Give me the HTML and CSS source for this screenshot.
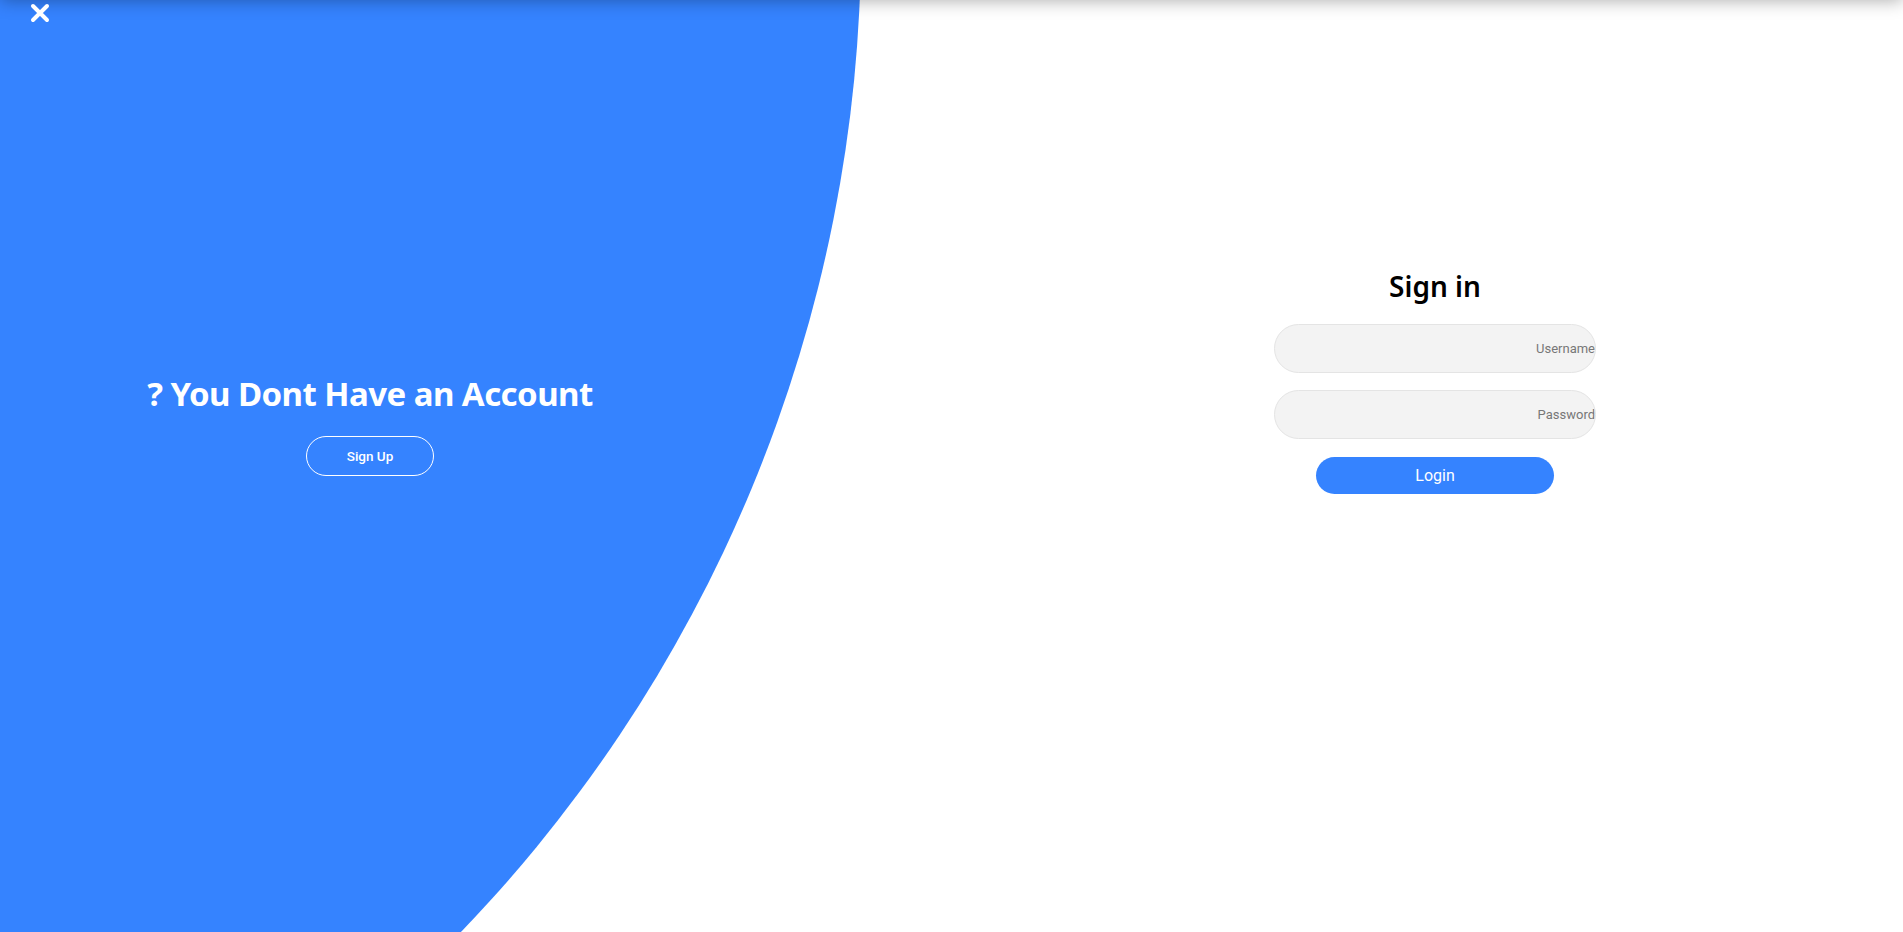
FILE: index.html
```html
<!DOCTYPE html>
<html lang="en">
<head>
<meta charset="utf-8">
<title>Sign in</title>
<link rel="stylesheet" href="styles.css">
</head>
<body>
<div class="page">
  <div class="blob"></div>
  <div class="top-shadow"></div>
  <button class="close" type="button" aria-label="Close">
    <svg width="20" height="20" viewBox="0 0 20 20"><path d="M3 3L17 17M17 3L3 17" stroke="#fff" stroke-width="4" stroke-linecap="round" fill="none"/></svg>
  </button>
  <main class="panels">
    <section class="panel panel-left">
      <h2 class="panel-title">? You Dont Have an Account</h2>
      <button class="btn-outline" type="button">Sign Up</button>
    </section>
    <section class="panel panel-right">
      <form class="signin-form">
        <h2 class="form-title">Sign in</h2>
        <input class="field" type="text" placeholder="Username">
        <input class="field" type="password" placeholder="Password">
        <button class="btn-primary" type="button">Login</button>
      </form>
    </section>
  </main>
</div>
</body>
</html>
```
FILE: styles.css
```css
* { box-sizing: border-box; }
html, body { margin: 0; padding: 0; height: 100%; }
body {
  background: #fff;
  font-family: "Noto Sans", "Open Sans", sans-serif;
  overflow: hidden;
}
.page {
  position: relative;
  width: 100%;
  height: 932px;
  overflow: hidden;
}
.blob {
  position: absolute;
  left: -1999px;
  top: -1490px;
  width: 2860px;
  height: 2860px;
  border-radius: 50%;
  background: #3583ff;
  z-index: 0;
}
.top-shadow {
  position: absolute;
  left: 0;
  right: 0;
  top: -20px;
  height: 20px;
  box-shadow: 0 0 18px rgba(0, 0, 0, 0.35);
  z-index: 2;
}
.close {
  position: absolute;
  left: 30px;
  top: 3px;
  width: 20px;
  height: 20px;
  padding: 0;
  border: 0;
  background: none;
  z-index: 3;
  cursor: pointer;
}
.close svg { display: block; }
.panels {
  position: relative;
  z-index: 1;
  display: grid;
  grid-template-columns: 740px 1fr;
  height: 100%;
}
.panel-left {
  display: flex;
  flex-direction: column;
  align-items: center;
  padding-top: 374px;
}
.panel-title {
  margin: 0;
  color: #fff;
  font-size: 33px;
  line-height: 40px;
  font-weight: 700;
  letter-spacing: -0.55px;
  white-space: nowrap;
}
.btn-outline {
  margin-top: 22px;
  width: 128px;
  height: 40px;
  border: 1px solid #fff;
  border-radius: 20px;
  background: transparent;
  color: #fff;
  font-family: Roboto, sans-serif;
  font-weight: 500;
  font-size: 13.5px;
  cursor: pointer;
}
.panel-right {
  padding-left: 227px;
  padding-top: 266px;
}
.signin-form {
  display: flex;
  flex-direction: column;
  align-items: center;
}
.form-title {
  margin: 0 0 18px;
  color: #000;
  font-size: 28px;
  line-height: 40px;
  font-weight: 600;
}
.field {
  width: 322px;
  height: 49px;
  margin-bottom: 17px;
  border: 1px solid #e4e4e4;
  border-radius: 25px;
  background: #f3f3f3;
  padding: 0;
  direction: rtl;
  font-family: Roboto, sans-serif;
  font-size: 13px;
  color: #333;
  outline: none;
}
.field::placeholder { color: #777; }
.btn-primary {
  margin-top: 1px;
  width: 238px;
  height: 37px;
  border: 0;
  border-radius: 19px;
  background: #3583ff;
  color: #fff;
  font-family: Roboto, sans-serif;
  font-size: 16px;
  cursor: pointer;
}
```
